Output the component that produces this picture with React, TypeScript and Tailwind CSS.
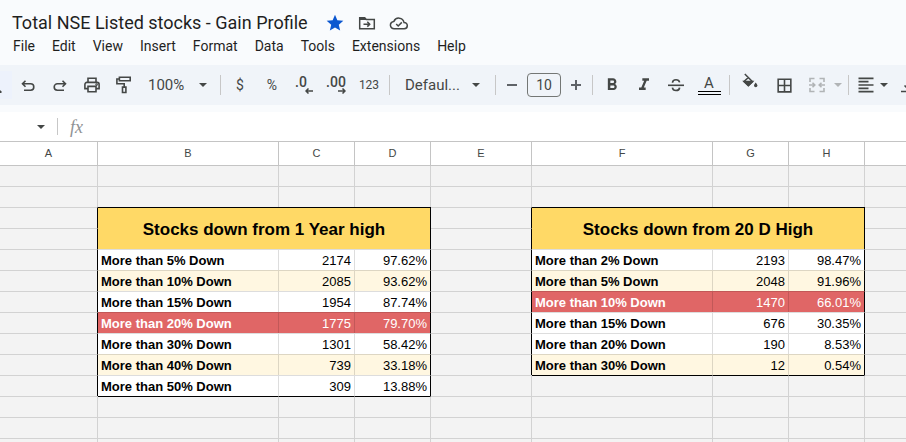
import React, { useState } from 'react';
import { MdBorderAll, MdFormatAlignLeft, MdFormatBold, MdFormatItalic, MdStar } from 'react-icons/md';

type Row = { label: string; count: string; pct: string; tone?: 'cream' | 'red' };
type Block = { title: string; rows: Row[] };

const MENUS = ['File', 'Edit', 'View', 'Insert', 'Format', 'Data', 'Tools', 'Extensions', 'Help'];
const COLUMNS = ['A', 'B', 'C', 'D', 'E', 'F', 'G', 'H', ''];
const ROW_COUNT = 14;
const TITLE_ROW = 2;
const DATA_ROW = 4;

const YEAR_HIGH: Block = {
    title: 'Stocks down from 1 Year high',
    rows: [
        { label: 'More than 5% Down', count: '2174', pct: '97.62%' },
        { label: 'More than 10% Down', count: '2085', pct: '93.62%', tone: 'cream' },
        { label: 'More than 15% Down', count: '1954', pct: '87.74%' },
        { label: 'More than 20% Down', count: '1775', pct: '79.70%', tone: 'red' },
        { label: 'More than 30% Down', count: '1301', pct: '58.42%' },
        { label: 'More than 40% Down', count: '739', pct: '33.18%', tone: 'cream' },
        { label: 'More than 50% Down', count: '309', pct: '13.88%' },
    ],
};

const DAY_HIGH: Block = {
    title: 'Stocks down from 20 D High',
    rows: [
        { label: 'More than 2% Down', count: '2193', pct: '98.47%' },
        { label: 'More than 5% Down', count: '2048', pct: '91.96%', tone: 'cream' },
        { label: 'More than 10% Down', count: '1470', pct: '66.01%', tone: 'red' },
        { label: 'More than 15% Down', count: '676', pct: '30.35%' },
        { label: 'More than 20% Down', count: '190', pct: '8.53%' },
        { label: 'More than 30% Down', count: '12', pct: '0.54%', tone: 'cream' },
    ],
};

/* ---------- toolbar pieces ---------- */

function Caret() {
    return (
        <svg viewBox="0 0 8 4" className="w-2 h-1 shrink-0 pointer-events-none" fill="currentColor">
            <path d="M0 0h8L4 4z" />
        </svg>
    );
}

function Separator() {
    return <div className="w-px h-5 mx-[3px] shrink-0 bg-[#c7c7c7]" />;
}

type ToolProps = { label: string; className?: string; onClick?: () => void; children: React.ReactNode };

function Tool({ label, className = 'w-8', onClick, children }: ToolProps) {
    return (
        <button aria-label={label} onClick={onClick} className={`h-8 shrink-0 flex items-center justify-center rounded hover:bg-slate-200 ${className}`}>
            {children}
        </button>
    );
}

function Icon({ children }: { children: React.ReactNode }) {
    return (
        <svg viewBox="0 0 18 18" className="w-[18px] h-[18px] shrink-0" fill="none" stroke="currentColor" strokeWidth="1.6">
            {children}
        </svg>
    );
}

function Toolbar() {
    const [fontSize, setFontSize] = useState(10);

    return (
        <div className="h-10 flex items-center overflow-hidden bg-[#f0f4f9] text-[#444746]">
            <button aria-label="Search the menus" className="w-3 h-7 pb-1.5 shrink-0 flex items-end bg-[#edf2fc]">
                <svg viewBox="0 0 2 3" className="w-[2px] h-[3px]" fill="currentColor"><path d="M0 0l1.5 1.5v1.5H0z" /></svg>
            </button>
            <Tool label="Undo">
                <Icon><path d="M6.500 4.800L3.500 7.800L6.500 10.800M4 7.800h7.600a3.200 3.200 0 0 1 0 6.400H5" /></Icon>
            </Tool>
            <Tool label="Redo">
                <Icon><path d="M11.500 4.800L14.500 7.800L11.500 10.800M14 7.800H6.400a3.200 3.200 0 0 0 0 6.400h6.600" /></Icon>
            </Tool>
            <Tool label="Print">
                <Icon>
                    <path d="M5 6V2.3h8V6M5 12.6H1.9V8.4a2 2 0 0 1 2-2h10.2a2 2 0 0 1 2 2v4.2H13M5 10.4h8v5.3H5z" />
                    <circle cx="13.6" cy="8.6" r=".5" />
                </Icon>
            </Tool>
            <Tool label="Paint format">
                <Icon>
                    <path d="M4.400 1.300h10.800v3.400H4.400zM4.400 3H1.900v4.700h7.300v3.400" />
                    <path d="M7.500 11.100h3.400v5.400H7.500z" />
                </Icon>
            </Tool>
            <label className="w-[77px] pl-2 shrink-0 flex items-center">
                <select aria-label="Zoom" className="w-[51px] appearance-none bg-transparent text-[15px]">
                    <option>100%</option>
                    <option>75%</option>
                    <option>50%</option>
                </select>
                <Caret />
            </label>
            <Separator />
            <Tool label="Format as currency"><span className="text-sm leading-4">$</span></Tool>
            <Tool label="Format as percent"><span className="text-sm leading-4">%</span></Tool>
            <Tool label="Decrease decimal places">
                <span className="flex flex-col items-end">
                    <span className="pr-[6px] text-sm leading-3 font-medium">.0</span>
                    <svg viewBox="0 0 8 6" className="w-2 h-[6px]" fill="none" stroke="currentColor" strokeWidth="1.5"><path d="M3.500 .5L1 3l2.500 2.500M1 3h7" /></svg>
                </span>
            </Tool>
            <Tool label="Increase decimal places">
                <span className="flex flex-col items-end">
                    <span className="text-sm leading-3 font-medium">.00</span>
                    <svg viewBox="0 0 8 6" className="w-2 h-[6px]" fill="none" stroke="currentColor" strokeWidth="1.5"><path d="M4.500 .5L7 3L4.500 5.500M7 3H0" /></svg>
                </span>
            </Tool>
            <Tool label="More formats" className="w-[34px]"><span className="text-xs">123</span></Tool>
            <Separator />
            <label className="w-[99px] pl-3 shrink-0 flex items-center">
                <select aria-label="Font" className="w-[67px] appearance-none bg-transparent text-[15px]">
                    <option>Defaul...</option>
                    <option>Arial</option>
                </select>
                <Caret />
            </label>
            <Separator />
            <Tool label="Decrease font size" className="w-[26px]" onClick={() => setFontSize(Math.max(1, fontSize - 1))}>
                <span className="w-[10px] h-[2px] bg-[#5f6368]" />
            </Tool>
            <input
                aria-label="Font size"
                value={fontSize}
                onChange={(e) => setFontSize(Number(e.target.value) || 1)}
                className="w-[34px] h-6 mx-[2px] shrink-0 rounded border border-[#747775] text-center text-sm"
            />
            <Tool label="Increase font size" className="w-[26px]" onClick={() => setFontSize(fontSize + 1)}>
                <svg viewBox="0 0 10 10" className="w-[10px] h-[10px]" stroke="#5f6368" strokeWidth="2"><path d="M5 0v10M0 5h10" /></svg>
            </Tool>
            <Separator />
            <Tool label="Bold"><MdFormatBold size={20} /></Tool>
            <Tool label="Italic"><MdFormatItalic size={20} /></Tool>
            <Tool label="Strikethrough">
                <Icon>
                    <path d="M1 9.300h16" />
                    <path d="M12.600 6.400C12.200 4.600 10.800 3.800 9 3.800S5.600 4.700 5.500 6.700M5.400 11.600c.3 2 1.700 2.900 3.600 2.900s3.500-.9 3.600-2.900" />
                </Icon>
            </Tool>
            <Tool label="Text color" className="w-[34px]">
                <span className="flex flex-col items-center">
                    <span className="text-[15px] leading-4">A</span>
                    <span className="w-[23px] h-1 border-y border-black" />
                </span>
            </Tool>
            <Separator />
            <Tool label="Fill color" className="w-[34px]">
                <svg viewBox="0 0 18 18" className="w-[18px] h-[18px] mb-2" fill="none" stroke="currentColor" strokeWidth="1.500">
                    <path d="M3.800 2l7.700 7.700L7.500 13.500L3 9.500L7.400 5.500" />
                    <path d="M3 9.500h8.600L7.300 13.800z" fill="currentColor" />
                    <path d="M14.700 10.500c-1.100 1.400-1.700 2.200-1.700 3a1.700 1.700 0 0 0 3.400 0c0-.8-.6-1.600-1.700-3z" fill="currentColor" stroke="none" />
                </svg>
            </Tool>
            <Tool label="Borders" className="w-[34px]"><MdBorderAll size={19} /></Tool>
            <Tool label="Merge cells" className="w-11 gap-2 pl-1 text-[#b1b4b6]">
                <Icon>
                    <path d="M6.500 2.500H2v3.500M2 12v3.500h4.500M11.500 2.500H16v3.500M16 12v3.500h-4.500M1 9h5M17 9h-5M4.500 6.700L6.800 9l-2.300 2.300M13.500 6.700L11.200 9l2.300 2.300" />
                </Icon>
                <Caret />
            </Tool>
            <Separator />
            <Tool label="Horizontal align" className="w-10 gap-1">
                <MdFormatAlignLeft size={20} />
                <Caret />
            </Tool>
            <Tool label="Vertical align" className="w-9">
                <Icon><path d="M0 15.500h18M9 2v10M3.500 9.500l5.500 5l5.500-5" /></Icon>
            </Tool>
        </div>
    );
}

/* ---------- sheet grid ---------- */

type EmptyProps = { first?: boolean; edge?: boolean; floor?: boolean; last?: boolean };

function Empty({ first, edge, floor, last }: EmptyProps) {
    return (
        <td
            className={`p-0 ${first ? 'h-5' : 'h-[21px] border-t'} ${last ? '' : 'border-r'} ${edge ? 'border-r-black' : 'border-r-[#00000022]'} ${floor ? 'border-t-black' : 'border-t-[#00000022]'}`}
        />
    );
}

function BlockCells({ block, row }: { block: Block; row: number }) {
    const end = DATA_ROW + block.rows.length;

    if (row === TITLE_ROW) {
        return (
            <td colSpan={3} rowSpan={2} className="px-0 pt-[2px] pb-0 border-t border-r border-black bg-[#ffd966] text-center text-[17px] font-bold">
                {block.title}
            </td>
        );
    }
    if (row === TITLE_ROW + 1) return null;
    if (row < TITLE_ROW || row >= end) {
        return (
            <>
                <Empty first={row === 0} floor={row === end} />
                <Empty first={row === 0} floor={row === end} />
                <Empty first={row === 0} floor={row === end} />
            </>
        );
    }

    const { label, count, pct, tone } = block.rows[row - DATA_ROW];
    const fill = tone === 'red' ? 'bg-[#e06666] text-white' : tone === 'cream' ? 'bg-[#fff7e1]' : 'bg-white';
    const cell = `h-[21px] pt-[2px] pb-0 px-[3px] border-t border-r border-t-[#00000022] leading-[18px] whitespace-nowrap ${fill}`;
    return (
        <>
            <td className={`${cell} border-r-[#00000022] font-bold`}>{label}</td>
            <td className={`${cell} border-r-[#00000022] text-right`}>{count}</td>
            <td className={`${cell} border-r-black text-right`}>{pct}</td>
        </>
    );
}

function inBlock(block: Block, row: number) {
    return row >= TITLE_ROW && row < DATA_ROW + block.rows.length;
}

function Sheet() {
    return (
        <table className="w-full table-fixed border-separate border-spacing-0 bg-[#f3f3f3] font-['Liberation_Sans',Arial,sans-serif] text-[13px] text-black">
            <colgroup>
                <col className="w-[98px]" />
                <col className="w-[181px]" />
                <col className="w-[76px]" />
                <col className="w-[76px]" />
                <col className="w-[101px]" />
                <col className="w-[181px]" />
                <col className="w-[76px]" />
                <col className="w-[76px]" />
                <col />
            </colgroup>
            <thead>
                <tr>
                    {COLUMNS.map((name, i) => (
                        <th key={i} scope="col" className="h-6 p-0 border-r border-b border-[#c4c4c4] last:border-r-0 bg-white text-[11px] font-normal text-[#444746]">
                            {name}
                        </th>
                    ))}
                </tr>
            </thead>
            <tbody>
                {Array.from({ length: ROW_COUNT }, (_, row) => (
                    <tr key={row}>
                        <Empty first={row === 0} edge={inBlock(YEAR_HIGH, row)} />
                        <BlockCells block={YEAR_HIGH} row={row} />
                        <Empty first={row === 0} edge={inBlock(DAY_HIGH, row)} />
                        <BlockCells block={DAY_HIGH} row={row} />
                        <Empty first={row === 0} last />
                    </tr>
                ))}
            </tbody>
        </table>
    );
}

export default function App() {
    return (
        <div className="h-screen overflow-hidden bg-[#f9fbfd] font-[Roboto,sans-serif] text-[#1f1f1f]">
            {/* Title and menus */}
            <header className="h-[65px] pt-[11px] pl-3">
                <div className="flex items-center h-6">
                    <h1 className="text-lg leading-6 whitespace-nowrap">Total NSE Listed stocks - Gain Profile</h1>
                    <div className="flex items-center gap-3 ml-[17px] text-[#444746]">
                        <button aria-label="Starred" className="text-[#0b57d0]"><MdStar size={20} /></button>
                        <button aria-label="Move">
                            <svg viewBox="0 0 20 20" className="w-5 h-5" fill="none" stroke="currentColor" strokeWidth="1.500">
                                <path d="M2.700 15.800V4.700h5l1.600 1.800h8v9.300zM2.700 6.200h6M6.500 11.200h6M10.300 8.800l2.400 2.400l-2.400 2.400" />
                            </svg>
                        </button>
                        <button aria-label="Document status">
                            <svg viewBox="0 0 20 20" className="w-5 h-5" fill="none" stroke="currentColor" strokeWidth="1.500">
                                <path d="M5.300 15.800a3.700 3.700 0 0 1-.4-7.400a5.300 5.300 0 0 1 10.100 1a3.200 3.200 0 0 1 .2 6.400zM7.200 11l2 2l3.600-3.600" />
                            </svg>
                        </button>
                    </div>
                </div>
                <nav className="flex gap-[17px] text-sm leading-5 pt-px pl-px">
                    {MENUS.map((menu) => (
                        <button key={menu}>{menu}</button>
                    ))}
                </nav>
            </header>

            <Toolbar />

            {/* Name box and formula bar */}
            <div className="mt-[7px] h-[30px] flex items-center border-b border-[#c4c4c4] bg-white text-[#444746]">
                <button aria-label="Name box" className="w-[57px] h-6 pr-3 flex items-center justify-end"><Caret /></button>
                <div className="w-px h-[17px] bg-[#c7c7c7]" />
                <label htmlFor="formula" className="w-9 pl-3 font-['Liberation_Serif',serif] italic text-lg leading-5 text-[#8f9294]">fx</label>
                <input id="formula" className="flex-1 h-6 outline-none" />
            </div>

            <Sheet />
        </div>
    );
}
